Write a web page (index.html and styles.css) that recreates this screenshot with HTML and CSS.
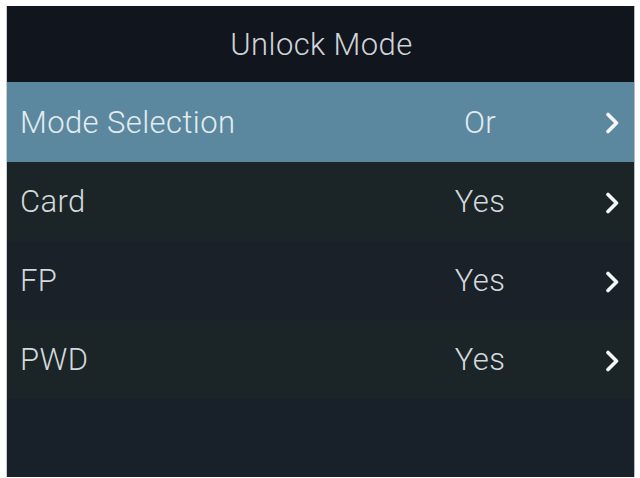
FILE: index.html
```html
<!DOCTYPE html>
<html lang="en">
<head>
<meta charset="utf-8">
<title>Unlock Mode</title>
<link rel="stylesheet" href="styles.css">
</head>
<body>
<div class="screen">
  <header class="title-bar">Unlock Mode</header>
  <ul class="menu">
    <li class="item item--active">
      <span class="label">Mode Selection</span>
      <span class="value">Or</span>
      <svg class="chevron" viewBox="0 0 14 22" width="14" height="22"><path d="M3 2.5 L11.5 11 L3 19.5"/></svg>
    </li>
    <li class="item">
      <span class="label">Card</span>
      <span class="value">Yes</span>
      <svg class="chevron" viewBox="0 0 14 22" width="14" height="22"><path d="M3 2.5 L11.5 11 L3 19.5"/></svg>
    </li>
    <li class="item item--alt">
      <span class="label">FP</span>
      <span class="value">Yes</span>
      <svg class="chevron" viewBox="0 0 14 22" width="14" height="22"><path d="M3 2.5 L11.5 11 L3 19.5"/></svg>
    </li>
    <li class="item">
      <span class="label">PWD</span>
      <span class="value">Yes</span>
      <svg class="chevron" viewBox="0 0 14 22" width="14" height="22"><path d="M3 2.5 L11.5 11 L3 19.5"/></svg>
    </li>
  </ul>
  <div class="filler"></div>
</div>
</body>
</html>
```
FILE: styles.css
```css
html, body {
  margin: 0;
  padding: 0;
  background: #ffffff;
}

body {
  width: 640px;
  height: 478px;
  overflow: hidden;
}

.screen {
  margin: 6px 0 0 7px;
  width: 627px;
  height: 471px;
  display: flex;
  flex-direction: column;
  background: #18202a;
  box-shadow: -1px 0 0 #c9cccf, 1px 0 0 #b9bcbf;
  font-family: Roboto, "Liberation Sans", Arial, sans-serif;
  font-weight: 300;
  font-size: 31px;
  letter-spacing: 0.4px;
  color: #d3d9dc;
}

.title-bar {
  height: 76px;
  flex: none;
  display: flex;
  align-items: center;
  justify-content: center;
  background: #10151e;
  color: #d0d4d7;
  padding-left: 2px;
}

.menu {
  list-style: none;
  margin: 0;
  padding: 0;
}

.item {
  height: 79px;
  display: grid;
  grid-template-columns: 1fr 120px 94px;
  align-items: center;
  padding-left: 13px;
  background: #1b2527;
}

.item--alt {
  background: #1a2128;
}

.item--active {
  height: 80px;
  background: #5b889f;
  color: #e2ecf0;
}

.value {
  text-align: center;
}

.chevron {
  justify-self: end;
  margin-right: 15px;
  margin-top: 2px;
}

.chevron path {
  fill: none;
  stroke: #f4f7f8;
  stroke-width: 3.6;
  stroke-linecap: round;
  stroke-linejoin: round;
}

.filler {
  flex: 1;
  background: #18202a;
}
```
